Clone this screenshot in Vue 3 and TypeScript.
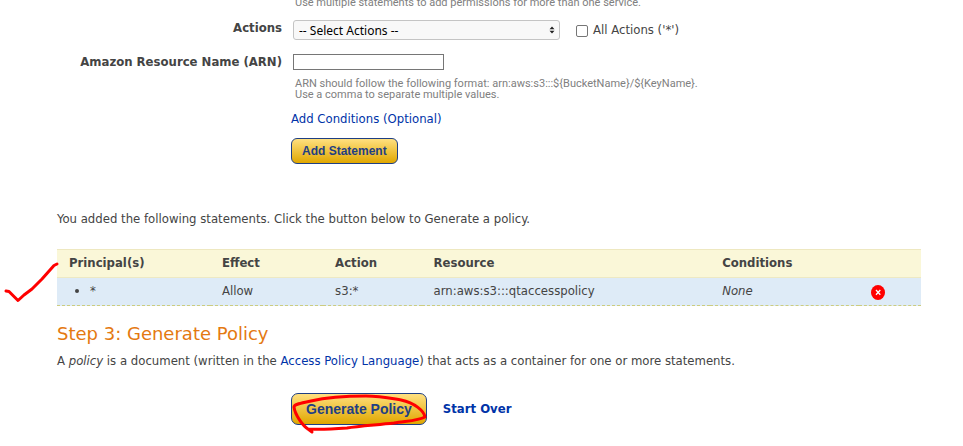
<script setup lang="ts">
import { ref } from 'vue'

interface Statement {
  principals: string[]
  effect: string
  action: string
  resource: string
  conditions: string | null
}

const selectedAction = ref('')
const allActions = ref(false)
const arn = ref('')
const statements = ref<Statement[]>([
  { principals: ['*'], effect: 'Allow', action: 's3:*', resource: 'arn:aws:s3:::qtaccesspolicy', conditions: null },
])

function removeStatement(index: number) {
  statements.value.splice(index, 1)
}
</script>

<template>
  <main class="page">
    <form class="form" @submit.prevent>
      <p class="hint field first">Use multiple statements to add permissions for more than one service.</p>

      <label class="label" for="actions">Actions</label>
      <div class="field actions">
        <span class="select-wrap">
          <select id="actions" v-model="selectedAction" class="select">
            <option value="">-- Select Actions --</option>
          </select>
          <svg class="arrows" viewBox="0 0 6 8" width="6" height="8" aria-hidden="true">
            <path d="M3 0.500 L5.500 3.300 H0.500 Z M3 7.500 L5.500 4.700 H0.500 Z" fill="#222" />
          </svg>
        </span>
        <label class="all"><input v-model="allActions" type="checkbox" class="check" />All Actions ('*')</label>
      </div>

      <label class="label" for="arn">Amazon Resource Name (ARN)</label>
      <input id="arn" v-model="arn" type="text" class="text" />
      <p class="hint field arn-hint">
        ARN should follow the following format: arn:aws:s3:::${BucketName}/${KeyName}.<br />
        Use a comma to separate multiple values.
      </p>

      <a class="field conditions" href="#">Add Conditions (Optional)</a>
      <button type="button" class="field gold">Add Statement</button>
    </form>

    <p class="intro">You added the following statements. Click the button below to Generate a policy.</p>

    <div class="table-wrap">
      <table class="table">
        <thead>
          <tr>
            <th class="c1">Principal(s)</th>
            <th class="c2">Effect</th>
            <th class="c3">Action</th>
            <th class="c4">Resource</th>
            <th class="c5">Conditions</th>
            <th class="c6"></th>
          </tr>
        </thead>
        <tbody>
          <tr v-for="(s, i) in statements" :key="i">
            <td><ul class="list"><li v-for="p in s.principals" :key="p">{{ p }}</li></ul></td>
            <td>{{ s.effect }}</td>
            <td>{{ s.action }}</td>
            <td>{{ s.resource }}</td>
            <td><em v-if="s.conditions === null">None</em><template v-else>{{ s.conditions }}</template></td>
            <td>
              <button type="button" class="remove" aria-label="Remove statement" @click="removeStatement(i)">
                <svg viewBox="0 0 14 15" width="14" height="15" aria-hidden="true">
                  <ellipse cx="7" cy="7.5" rx="7" ry="7.5" fill="#f00" />
                  <path d="M5 5 L9.300 9.700 M9.300 5 L5 9.700" stroke="#fff" stroke-width="1.300" fill="none" />
                </svg>
              </button>
            </td>
          </tr>
        </tbody>
      </table>
      <svg class="tick" viewBox="0 0 60 44" width="60" height="44" aria-hidden="true">
        <path d="M6 30 L9 30.500 L18 39.500 L24 34 L32 28 L42 18 L50 9 L54 4.500 L57 3" />
      </svg>
    </div>

    <h2 class="title">Step 3: Generate Policy</h2>
    <p class="about">
      A <em>policy</em> is a document (written in the <a href="#">Access Policy Language</a>) that acts as a container for one or more statements.
    </p>

    <div class="final">
      <span class="circled">
        <button type="button" class="gold large">Generate Policy</button>
        <svg class="loop" viewBox="0 0 140 44" width="140" height="44" aria-hidden="true">
          <path d="M22 40 L18 37 C13 34 5 23 4 15 C4 12 13 11 21 9 C38 5 56 4 76 4 C90 4 99 6 111 8 C125 11 134 19 135 25 C128 29 115 29 104 31 C86 33 68 34 57 36 C44 37 30 38 18 37" />
        </svg>
      </span>
      <a class="over" href="#">Start Over</a>
    </div>
  </main>
</template>

<style>
body {
  margin: 0;
  background: #fff;
}
</style>

<style scoped>
.page {
  padding: 0 42px 16px 57px;
  color: #444;
  font: 13px/16px "DejaVu Sans Condensed", "DejaVu Sans", sans-serif;
}

p,
h2,
ul {
  margin: 0;
  padding: 0;
}

a {
  color: #0033a8;
  text-decoration: none;
}

.form {
  display: grid;
  grid-template-columns: 225px 1fr;
  column-gap: 11px;
  justify-items: start;
}

.field {
  grid-column: 2;
}

.label {
  justify-self: end;
  font-weight: bold;
  white-space: nowrap;
}

.hint {
  padding-left: 2px;
  color: #808080;
  font: 11px/11px Roboto, sans-serif;
}

.first {
  margin-top: -3px;
  margin-bottom: 12px;
}

.actions {
  display: flex;
  align-items: center;
  gap: 16px;
}

.select-wrap {
  position: relative;
  display: flex;
}

.select {
  appearance: none;
  box-sizing: border-box;
  width: 267px;
  height: 20px;
  padding: 0 20px 0 5px;
  border: 1px solid #c4c4c4;
  border-radius: 3px;
  background: #f8f8f8;
  color: #000;
  font: 12px "Noto Sans", sans-serif;
}

.arrows {
  position: absolute;
  right: 5px;
  top: 6px;
}

.all {
  display: flex;
  align-items: center;
  gap: 5px;
}

.check {
  appearance: none;
  box-sizing: border-box;
  width: 12px;
  height: 12px;
  margin: 1px 0 0;
  border: 1px solid #767676;
  border-radius: 2px;
  background: #fff;
}

.check:checked {
  background: #0033a8;
}

.actions,
.label[for="actions"] {
  margin-bottom: 14px;
}

.text {
  box-sizing: border-box;
  width: 151px;
  height: 16px;
  padding: 0 2px;
  border: 1px solid #767676;
  background: #fff;
  font: 12px "Noto Sans", sans-serif;
}

.arn-hint {
  margin-top: 8px;
}

.conditions {
  margin: 11px 0 11px -2px;
}

.gold {
  box-sizing: border-box;
  height: 26px;
  padding: 0 10px;
  border: 1px solid #1f3f83;
  border-radius: 6px;
  background: linear-gradient(#ffe080, #e0a700);
  color: #1f3f83;
  font: bold 12px "Liberation Sans", Arial, sans-serif;
}

.form .gold {
  margin-left: -2px;
}

.intro {
  margin: 47px 0 22px;
}

.table-wrap {
  position: relative;
}

.table {
  width: 100%;
  table-layout: fixed;
  border-collapse: collapse;
}

th,
td {
  box-sizing: border-box;
  padding: 5px 0 6px 12px;
  text-align: left;
}

th {
  border-top: 1px solid #eee8c0;
  border-bottom: 1px solid #ede9c4;
  background: #faf7d8;
}

td {
  padding-top: 4px;
  padding-bottom: 5px;
  border-bottom: 1px dashed #cccc80;
  background: #deebf7;
}

.c1 { width: 17.7%; }
.c2 { width: 13.1%; }
.c3 { width: 11.4%; }
.c4 { width: 33.4%; }
.c5 { width: 17.2%; }

.list {
  padding-left: 21px;
}

.remove {
  display: flex;
  height: 15px;
  margin-top: 3px;
  padding: 0;
  border: 0;
  background: none;
}

.tick,
.loop {
  position: absolute;
  overflow: visible;
  fill: none;
  stroke: #f00;
  stroke-width: 3;
  stroke-linecap: round;
  stroke-linejoin: round;
  pointer-events: none;
}

.tick {
  left: -57px;
  top: 12px;
}

.title {
  margin-top: 17px;
  color: #e47911;
  font: 18px/22px "DejaVu Sans", sans-serif;
}

.about {
  margin-top: 8px;
}

.final {
  display: flex;
  align-items: center;
  gap: 16px;
  margin: 24px 0 0 234px;
}

.circled {
  position: relative;
  display: flex;
}

.large {
  height: 32px;
  padding: 0 14px;
  border-radius: 7px;
  font-size: 14px;
}

.loop {
  left: -1px;
  top: -1px;
}

.over {
  font-weight: bold;
}
</style>
